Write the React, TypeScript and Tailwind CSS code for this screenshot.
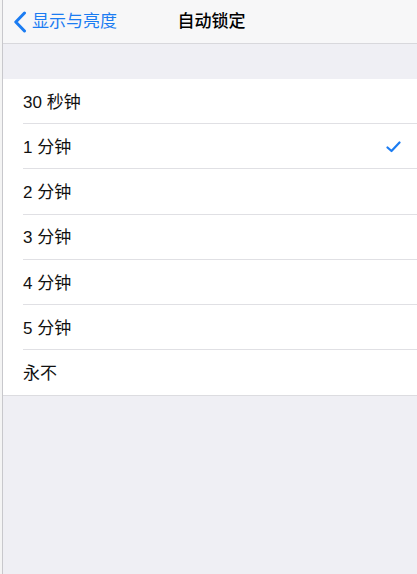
const options = ['30 秒钟', '1 分钟', '2 分钟', '3 分钟', '4 分钟', '5 分钟', '永不'];

export default function App() {
  const selected = 1;
  return (
    <div
      className="flex h-[574px] w-full bg-[#efeff4]"
      style={{ fontFamily: '"Liberation Sans", "Noto Sans CJK SC", sans-serif' }}
    >
      {/* edge of neighbouring pane */}
      <div className="w-[3px] shrink-0 border-r border-[#c8c8cc] bg-[#f4f4f4]" />

      <div className="flex flex-1 flex-col">
        <div className="relative flex h-[44px] items-center border-b border-[#d8d8dc] bg-[#f7f7f8]">
          <div className="flex items-center pl-[10px] text-[#1b7cf2]">
            <svg width="14" height="22" viewBox="0 0 14 22" fill="none">
              <path d="M11.5 2 L2.8 11 L11.5 20" stroke="currentColor" strokeWidth="3" strokeLinecap="round" strokeLinejoin="round" />
            </svg>
            <span className="ml-[5px] text-[17px] leading-none">显示与亮度</span>
          </div>
          <div className="absolute inset-x-0 top-0 flex h-full items-center justify-center pointer-events-none">
            <span className="ml-[3px] text-[17px] font-medium text-black">自动锁定</span>
          </div>
        </div>

        <div className="h-[35px]" />

        <ul className="border-b border-[#dcdce0] bg-white">
          {options.map((o, i) => (
            <li key={o} className="flex h-[45.2px] items-center pl-[20px]">
              <div
                className={
                  'flex h-full flex-1 items-center pr-[16px] ' +
                  (i < options.length - 1 ? 'border-b border-[#e0e0e4]' : '')
                }
              >
                <span className="flex-1 pt-[3px] text-[17px] text-[#111]">{o}</span>
                {i === selected && (
                  <svg width="15" height="12" viewBox="0 0 15 12" fill="none" className="mt-[1px] text-[#1b7cf2]">
                    <path d="M1.5 6.5 L5.5 10 L13.5 1.5" stroke="currentColor" strokeWidth="2.2" strokeLinecap="round" strokeLinejoin="round" />
                  </svg>
                )}
              </div>
            </li>
          ))}
        </ul>
      </div>
    </div>
  );
}
